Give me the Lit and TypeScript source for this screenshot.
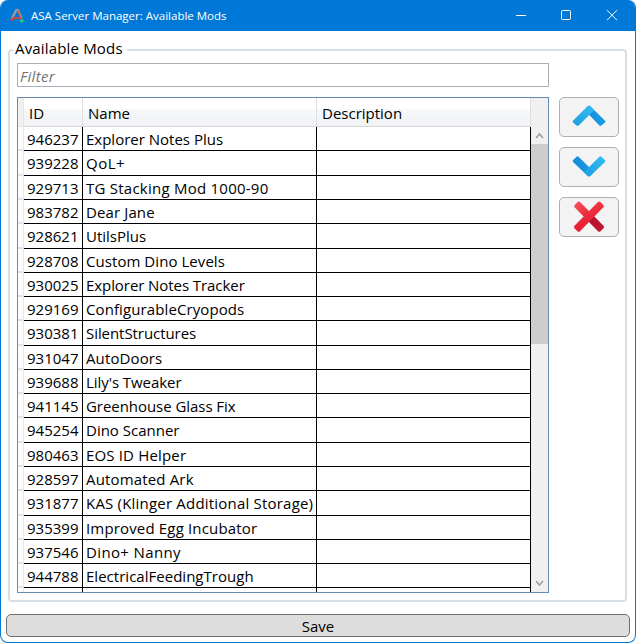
import { LitElement, html, css, svg } from "lit";
import { customElement } from "lit/decorators.js";

interface Mod { id: string; name: string; spacing: number }

const mod = (id: string, name: string, spacing = 0): Mod => ({ id, name, spacing });

const MODS: Mod[] = [
  mod("946237", "Explorer Notes Plus"),
  mod("939228", "QoL+", 0.5),
  mod("929713", "TG Stacking Mod 1000-90", 0.24),
  mod("983782", "Dear Jane", 0.12),
  mod("928621", "UtilsPlus"),
  mod("928708", "Custom Dino Levels", 0.06),
  mod("930025", "Explorer Notes Tracker", -0.07),
  mod("929169", "ConfigurableCryopods", 0.1),
  mod("930381", "SilentStructures", -0.06),
  mod("931047", "AutoDoors", 0.12),
  mod("939688", "Lily's Tweaker", -0.06),
  mod("941145", "Greenhouse Glass Fix", -0.05),
  mod("945254", "Dino Scanner"),
  mod("980463", "EOS ID Helper", 0.16),
  mod("928597", "Automated Ark", 0.16),
  mod("931877", "KAS (Klinger Additional Storage)", 0.2),
  mod("935399", "Improved Egg Incubator", 0.16),
  mod("937546", "Dino+ Nanny", 0.36),
  mod("944788", "ElectricalFeedingTrough", 0.02),
  mod("", ""),
];

// Rows are 24.267px tall, snapped to whole pixels.
const edge = (k: number) => (k === 0 ? 0 : Math.floor(k * 24.267 + 0.73));

@customElement("mod-grid")
export class ModGrid extends LitElement {
  static styles = css`
    :host { display: grid; grid-template-columns: 1fr 17px; box-sizing: border-box; width: 532px; height: 496px; border: 1px solid #688caf; background: #fff; overflow: hidden; }
    .table { overflow: hidden; height: 494px; }
    .row, .head { display: grid; grid-template-columns: 6px 59px 234px 214px; }
    .head { height: 29px; grid-template-rows: 29px; }
    .head div { box-sizing: border-box; border-right: 1px solid #dcdee0; border-bottom: 1px solid #d5d7da; padding-left: 5px; line-height: 30px; background: linear-gradient(#fff 0, #fff 38%, #f7f8fa 40%, #f1f2f4 100%); }
    .head .corner { background: #f0f0f0; border-color: #e6e6e6; padding: 0; }
    .row div { box-sizing: border-box; border-right: 1px solid #000; border-bottom: 1px solid #000; padding-left: 3px; line-height: 25px; white-space: nowrap; overflow: hidden; }
    .row .grip { border-right: 1px solid #e8e8e8; border-bottom: 2px solid #e4e4e4; padding: 0; background: #fcfcfc; }
    .bar { background: #f0f0f0; display: flex; flex-direction: column; padding-top: 29px; height: 465px; }
    .bar svg { display: block; flex: none; width: 17px; height: 17px; fill: none; stroke: #9d9d9d; stroke-width: 1.5; }
    .thumb { height: 200px; background: #cdcdcd; margin-bottom: auto; }
  `;

  render() {
    return html`
      <div class="table">
        <div class="head"><div class="corner"></div><div>ID</div><div>Name</div><div>Description</div></div>
        ${MODS.map((m, i) => html`
          <div class="row" style="height:${edge(i + 1) - edge(i)}px">
            <div class="grip"></div><div>${m.id}</div>
            <div class="name" style="letter-spacing:${m.spacing}px">${m.name}</div><div></div>
          </div>`)}
      </div>
      <div class="bar">
        <svg viewBox="0 0 17 17"><path d="M5 11 8.5 7 12 11" /></svg>
        <div class="thumb"></div>
        <svg viewBox="0 0 17 17"><path d="M5 6 8.5 10 12 6" /></svg>
      </div>`;
  }
}

const ICONS = {
  up: svg`<path d="M35 22.7 20.2 8.1Q19 7.2 17.8 8.1L14.8 12.2 29.4 27.6Q30.4 28.4 31.4 27.6L35 24.4Q35.7 23.5 35 22.7Z" fill="url(#b)"/><path d="M3 22.7 17.8 8.1Q19 7.2 20.2 8.1L24.2 12.2 8.6 27.6Q7.6 28.4 6.6 27.6L3 24.4Q2.3 23.5 3 22.7Z" fill="url(#a)"/>`,
  down: svg`<path d="M3 12.2 6.6 8.7Q7.6 7.9 8.6 8.7L24 24 20.2 28.1Q19 29 17.8 28.1L3 13.9Q2.3 13 3 12.2Z" fill="url(#b)"/><path d="M35 12.2 31.4 8.7Q30.4 7.9 29.4 8.7L14 24 17.8 28.1Q19 29 20.2 28.1L35 13.9Q35.7 13 35 12.2Z" fill="url(#a)"/>`,
  cross: svg`<path d="M4.6 7 7.6 4Q8.9 3 10 4L33.5 27.8Q34.6 29 33.5 30.2L30.5 33.2Q29.2 34.2 28 33.2L4.6 9.3Q3.6 8.2 4.6 7Z" fill="url(#d)"/><path d="M33.4 7 30.4 4Q29.1 3 28 4L4.5 27.8Q3.4 29 4.5 30.2L7.5 33.2Q8.8 34.2 10 33.2L33.4 9.3Q34.4 8.2 33.4 7Z" fill="url(#c)"/>`,
};

@customElement("tool-button")
export class ToolButton extends LitElement {
  static properties = { icon: { type: String } };
  declare icon: "up" | "down" | "cross";
  static styles = css`
    :host { display: flex; box-sizing: border-box; width: 60px; height: 40px; border: 1px solid #adb0b2; border-radius: 5px; background: #f3f3f3; justify-content: center; align-items: center; }
    svg { width: 38px; height: 38px; display: block; }
  `;
  render() {
    return html`<svg viewBox="0 0 38 38"><defs>
      <linearGradient id="a" x1="0" y1="1" x2="1" y2="0"><stop stop-color="#1c9de4"/><stop offset="1" stop-color="#34bdf0"/></linearGradient>
      <linearGradient id="b"><stop stop-color="#168bd6"/><stop offset="1" stop-color="#1a9ce7"/></linearGradient>
      <linearGradient id="c" x1="0" y1="0" x2="0" y2="1"><stop stop-color="#f03445"/><stop offset="1" stop-color="#e81e32"/></linearGradient>
      <linearGradient id="d" x1="0" y1="0" x2="1" y2="1"><stop stop-color="#f9565f"/><stop offset=".5" stop-color="#e92336"/><stop offset=".56" stop-color="#b5122c"/><stop offset="1" stop-color="#c51a37"/></linearGradient>
      </defs>${ICONS[this.icon]}</svg>`;
  }
}

@customElement("app-root")
export class AppRoot extends LitElement {
  static styles = css`
    :host { display: flex; flex-direction: column; box-sizing: border-box; width: 636px; height: 643px; border: 1px solid #0078d4; border-top: 0; border-radius: 8px; overflow: hidden; background: #fff; font: 15px "Open Sans", "Noto Sans", sans-serif; color: #000; }
    .title { height: 31px; flex: none; background: #0078d7; color: #fff; display: flex; align-items: center; font-size: 11.5px; margin: 0 -1px; }
    .logo { width: 16px; height: 16px; margin: 0 6px 0 9px; }
    .caption { flex: 1; }
    .ctl { width: 46px; height: 31px; fill: none; stroke: #fff; stroke-width: 1; }
    .group { box-sizing: border-box; margin: 8px 7px 0; padding: 0 7px; width: 619px; height: 563px; border: 0; min-width: 0; position: relative; }
    .frame { position: absolute; inset: 10px 0 0 0; border: 2px solid #d5dfe5; border-radius: 4px; }
    .legend { position: relative; display: inline-block; background: #fff; margin-left: -2px; padding: 0 4px 0 2px; height: 19px; line-height: 19px; vertical-align: top; letter-spacing: 0.17px; }
    .body { position: relative; display: flex; gap: 10px; margin: 4px 0 0 2px; }
    .filter { box-sizing: border-box; width: 532px; height: 24px; border: 1px solid #abadb3; padding-left: 2px; line-height: 24px; font-style: italic; color: #757575; margin-bottom: 10px; letter-spacing: 0.3px; }
    .tools { display: flex; flex-direction: column; gap: 10px; padding-top: 34px; }
    .save { box-sizing: border-box; height: 23px; width: 624px; margin: 12px 0 0 5px; border: 1px solid #707070; border-radius: 5px; background: #ddd; text-align: center; line-height: 22px; }
  `;
  render() {
    return html`
      <div class="title">
        <svg class="logo" viewBox="0 0 16 16"><path d="M2.8 11 7.2 2.2H9L12.6 10" fill="none" stroke="#a09c9e" stroke-width="2.2"/><path d="M8.4 2.5 12 10" stroke="#ce4c45" stroke-width="1.3"/><path d="M.5 12.5 4 9 11.5 9.3 12.5 11.3 6 10.8 3.5 12.8Z" fill="#d2473e"/><path d="M12 10.5H13.5V12H15V13.5H13.5V15H12V13.5H10.5V12H12Z" fill="#24cd5c"/></svg>
        <span class="caption">ASA Server Manager: Available Mods</span>
        <svg class="ctl"><path d="M18 15.5H28"/></svg>
        <svg class="ctl"><rect x="17.5" y="10.5" width="9" height="9" rx="1"/></svg>
        <svg class="ctl"><path d="M17 10.2 27 20.2M27 10.2 17 20.2"/></svg>
      </div>
      <div class="group">
        <div class="frame"></div>
        <span class="legend">Available Mods</span>
        <div class="body">
          <div><div class="filter">Filter</div><mod-grid></mod-grid></div>
          <div class="tools"><tool-button icon="up"></tool-button><tool-button icon="down"></tool-button><tool-button icon="cross"></tool-button></div>
        </div>
      </div>
      <div class="save">Save</div>`;
  }
}
